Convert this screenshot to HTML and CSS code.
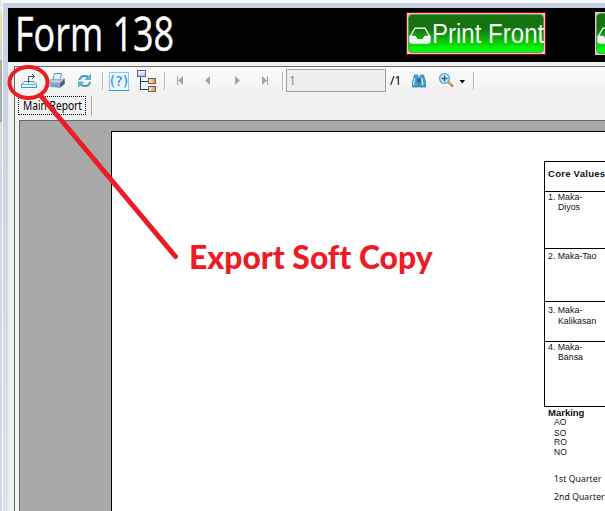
FILE: index.html
```html
<!DOCTYPE html>
<html lang="en">
<head>
<meta charset="utf-8">
<title>Form 138</title>
<link rel="stylesheet" href="styles.css">
</head>
<body>
<svg class="defs" width="0" height="0">
  <symbol id="tray" viewBox="0 0 22 17"><path d="M1 10L6 1.200h10L21 10" fill="none" stroke="#e8f3ee" stroke-width="1.500"/><path d="M.3 8.700h6.200l2 3.200h5l2-3.200h6.200V14q0 2.800-3 2.800H3.300q-3 0-3-2.800z" fill="#eef5f2"/></symbol>
</svg>
<div class="edge"></div>
<div class="window">
  <header class="header">
    <h1 class="title"><span>Form 138</span></h1>
    <button class="print"><span class="face"><svg width="22" height="17"><use href="#tray"/></svg><span class="label">Print Front</span></span></button>
    <button class="print second"><span class="face"><svg width="22" height="17"><use href="#tray"/></svg></span></button>
  </header>
  <main class="viewer">
    <div class="toolbar">
      <svg width="591" height="28" viewBox="14 67 591 28" class="icons">
        <defs>
          <linearGradient id="b" x2="0" y2="1"><stop stop-color="#fff"/><stop offset="1" stop-color="#9ccdef"/></linearGradient>
          <linearGradient id="o"><stop stop-color="#fff4b0"/><stop offset="1" stop-color="#ff9400"/></linearGradient>
        </defs>
        <g fill="none" stroke="#4795b5"><path d="M24 81.500h10l2.500 3v3h-15v-3z" fill="#e5f5fb"/><path d="M21.500 84.500h15" stroke="#78b6ca"/><path d="M28.500 83v-6.500h6M32 74l2.500 2.500L32 79" stroke="#28576e"/></g>
        <g><path d="M54.500 73.500h7l-1.500 7h-7z" fill="#e8f6ff" stroke="#4b97cb"/><path d="M50 80l4-1 8 1 2-2 .5 6-4.500 3.500-10-1z" fill="#c3cadb" stroke="#8a93ad" stroke-width=".8"/><path d="M50 82l10 1v4l-10-1z" fill="#9aa6c4"/><path d="M52 84.500l6 .6v1.700l-6-.6z" fill="#33ace2"/><path d="M60 83l4.500-4v5L60 87.500z" fill="#4e5d84"/></g>
        <g fill="none" stroke="#3592b1" stroke-width="2"><path d="M79.500 80q1-4 5-4 3 0 4.500 2M90 82q-1 4-5 4-3 0-4.500-2"/><path d="M90.500 74.500v5h-5zM78.500 87v-5h5z" fill="#72c4d5" stroke-width=".7"/><path d="M80.500 79q1.500-2 4-2M89 83q-1.500 2-4 2" stroke="#a2e1ea" stroke-width=".8"/></g>
        <path d="M102.500 72v18M164.500 72v18M282.500 72v18M473.500 72v18" stroke="#b7b7b7"/><path d="M103.500 73v17M165.500 73v17M283.500 73v17M474.500 73v17" stroke="#fff"/>
        <rect x="109.500" y="72.500" width="19" height="18" fill="#edf7ff" stroke="#8bc7ff"/><path d="M109 90.500h20" stroke="#2995f5"/>
        <text x="119" y="86" class="help" text-anchor="middle">(?)</text>
        <path d="M140.500 76v13.500H148M140.500 81.500h8" fill="none" stroke="#183d69"/>
        <rect x="137.500" y="70.500" width="8" height="6" fill="url(#b)" stroke="#615d9c"/><rect x="148.500" y="78.500" width="7" height="5" fill="url(#o)" stroke="#66538a"/><rect x="148.500" y="86.500" width="7" height="5" fill="url(#o)" stroke="#66538a"/>
        <path d="M177 76h1v9h-1zM183 76v9l-5-4.500zM210 76v9l-5-4.500zM235 76v9l5-4.500zM262 76v9l5-4.500zM267 76h1v9h-1z" fill="#a5a5a5"/>
        <g fill="#4c9dcb" stroke="#2379ae" stroke-width=".8"><path d="M414.500 75h3l1 3v9h-6v-5zM420.500 75h3l2 7v5h-6v-9z"/><path d="M417 79h4v3h-4z" fill="#285e8d"/><path d="M414.500 78l-1 7M421.500 78l1.500 7" stroke="#c2ebfb" stroke-width="1.300"/></g>
        <path d="M448.500 82l4.500 4.500" stroke="#c78443" stroke-width="2.600"/><path d="M449 82l3 3" stroke="#f6c48a"/><circle cx="444.500" cy="78.500" r="4.900" fill="#c6ebff" stroke="#5ba9df" stroke-width="1.400"/><path d="M441.500 78.500h6M444.500 75.500v6" stroke="#245a8a" stroke-width="1.300"/>
        <path d="M459.500 80h5.500l-2.700 3.500z" fill="#000"/>
      </svg>
      <input class="page-number" value="1" disabled aria-label="Page"><span class="page-total">/1</span>
    </div>
    <nav class="tabs"><div class="tab"><span>Main Report</span></div><i></i></nav>
    <section class="canvas">
      <article class="paper">
        <div class="report">
          <div class="values">
            <div class="row head">Core Values</div>
            <div class="row diyos">1. Maka-<br><span>Diyos</span></div>
            <div class="row tao">2. Maka-Tao</div>
            <div class="row kalikasan">3. Maka-<br><span>Kalikasan</span></div>
            <div class="row bansa">4. Maka-<br><span>Bansa</span></div>
          </div>
          <div class="marking"><b>Marking</b><div>AO</div><div class="so">SO</div><div>RO</div><div>NO</div></div>
          <div class="quarters"><p>1st Quarter</p><p>2nd Quarter</p></div>
        </div>
      </article>
    </section>
  </main>
</div>
<div class="annotation">
  <svg width="605" height="511"><ellipse cx="28.500" cy="82.500" rx="19" ry="15.500"/><path d="M41 96L175.500 256.500"/></svg>
  <span class="note">Export Soft Copy</span>
</div>
</body>
</html>
```
FILE: styles.css
```css
* { box-sizing: border-box; }
body { margin: 0; width: 605px; height: 511px; overflow: hidden; display: flex; background: #f4f7fa; font-family: "Liberation Sans", sans-serif; position: relative; }
.defs { position: absolute; }
.edge { flex: none; width: 3px; background: linear-gradient(#e5e5e5 0 13px, #e6dfad 13px 41px, #d4d4d4 41px 60px, #aaa 60px 122px, #d8d8d8 122px); border-right: 1px solid #f7f7f7; }
.window { flex: none; width: 602px; height: 508px; margin-top: 3px; background: linear-gradient(90deg, #f0f0f0, #f0f0f0) padding-box, linear-gradient(#c5d0e0, #d9e4f2) border-box; border: solid transparent; border-width: 5px 0 0 5px; overflow: hidden; }
.header { height: 54px; background: #000; display: flex; width: 800px; }
.title { flex: none; margin: 0; width: 398px; padding-left: 7px; font: 500 47px/50px "Open Sans", sans-serif; color: #fff; -webkit-text-stroke: .4px #fff; }
.title span { display: inline-block; transform: scaleX(.765); transform-origin: 0 0; white-space: nowrap; }
.print { margin: 4px 49px 0 0; width: 140px; height: 43px; flex: none; padding: 1px; border: 1px solid #9a0000; background: #e6c9c2; }
.print.second { border: 0; padding: 1px; }
.face { display: flex; align-items: center; width: 100%; height: 100%; border: 1px solid #659663; border-radius: 4px; background: linear-gradient(#15740f 0 38%, #10b20a 65%, #04fb02 92%); color: #f0faf4; }
.face svg { flex: none; margin: 4px 1px 0 0; }
.label { font: 27px/36px "Liberation Sans", sans-serif; white-space: nowrap; transform: scaleX(.89); transform-origin: 0 50%; width: 110px; }
.viewer { margin: 4px 0 0 6px; border-left: 1px solid #696969; border-top: 1px solid #696969; height: 450px; }
.toolbar { height: 28px; background: linear-gradient(#fcfcfc, #f0f0f0); display: flex; position: relative; padding: 2px 0 0 271px; }
.icons { position: absolute; left: -1px; top: 0; }
.help { font: 14px "DejaVu Sans", sans-serif; fill: #1689ef; }
.page-number { width: 100px; height: 23px; padding: 0 2px 1px; border: 1px solid #a0a0a0; background: #eee; color: #888; font: 12px "Noto Sans", sans-serif; }
.page-total { font: 12px/23px "Noto Sans", sans-serif; margin-left: 4px; }
.tabs { height: 25px; display: flex; padding: 1px 0 0 3px; }
.tab { width: 68px; height: 19px; border: 1px dotted #000; background: #f3f3f3; font: 12px/17px "Noto Sans", sans-serif; padding-left: 4px; white-space: nowrap; }
.tab span { display: inline-block; transform: scaleX(.85); transform-origin: 0 0; }
.tabs i { width: 2px; height: 20px; margin-left: 5px; border-left: 1px solid #aaa; background: #fff; }
.canvas { margin-left: 4px; height: 391px; border-left: 1px solid #696969; border-top: 1px solid #696969; background: #a9a9a9; padding: 10px 0 0 91px; }
.paper { height: 380px; background: #fff; border-left: 1px solid #000; border-top: 1px solid #000; }
.report { margin-left: 432px; padding-top: 29px; width: 75px; color: #111; }
.values { border-left: 1px solid #000; border-top: 1px solid #000; }
.row { font-size: 8.8px; line-height: 11px; padding-left: 3px; border-bottom: 1px solid #000; white-space: nowrap; }
.row span { margin-left: 10px; }
.row.head { height: 30px; font-weight: bold; font-size: 9.6px; line-height: 24px; letter-spacing: .22px; }
.diyos { height: 57px; }
.tao { height: 53px; padding-top: 2px; }
.kalikasan { height: 40px; padding-top: 3px; }
.bansa { height: 65px; }
.row.diyos, .row.bansa { line-height: 10px; }
.marking { padding: 0 0 0 10px; font: 8.5px/9.500px "Liberation Sans", sans-serif; height: 66px; }
.marking b { display: block; font-size: 9.5px; line-height: 11px; margin-left: -6px; }
.so { margin-top: 1px; }
.quarters { padding-left: 10px; font: 8.6px/12px "Noto Sans", sans-serif; letter-spacing: .1px; white-space: nowrap; }
.quarters p { margin: 0 0 6px; }
.annotation { position: absolute; inset: 0; pointer-events: none; }
.annotation svg { fill: none; stroke: #ed1c24; stroke-width: 4; stroke-linecap: round; }
.annotation path { stroke-width: 5; }
.note { position: absolute; left: 189px; top: 236px; color: #ed1c24; font: 900 32px/42px Lato, sans-serif; font-variant-ligatures: none; white-space: nowrap; transform-origin: 0 0; transform: scaleX(.995); }
```
